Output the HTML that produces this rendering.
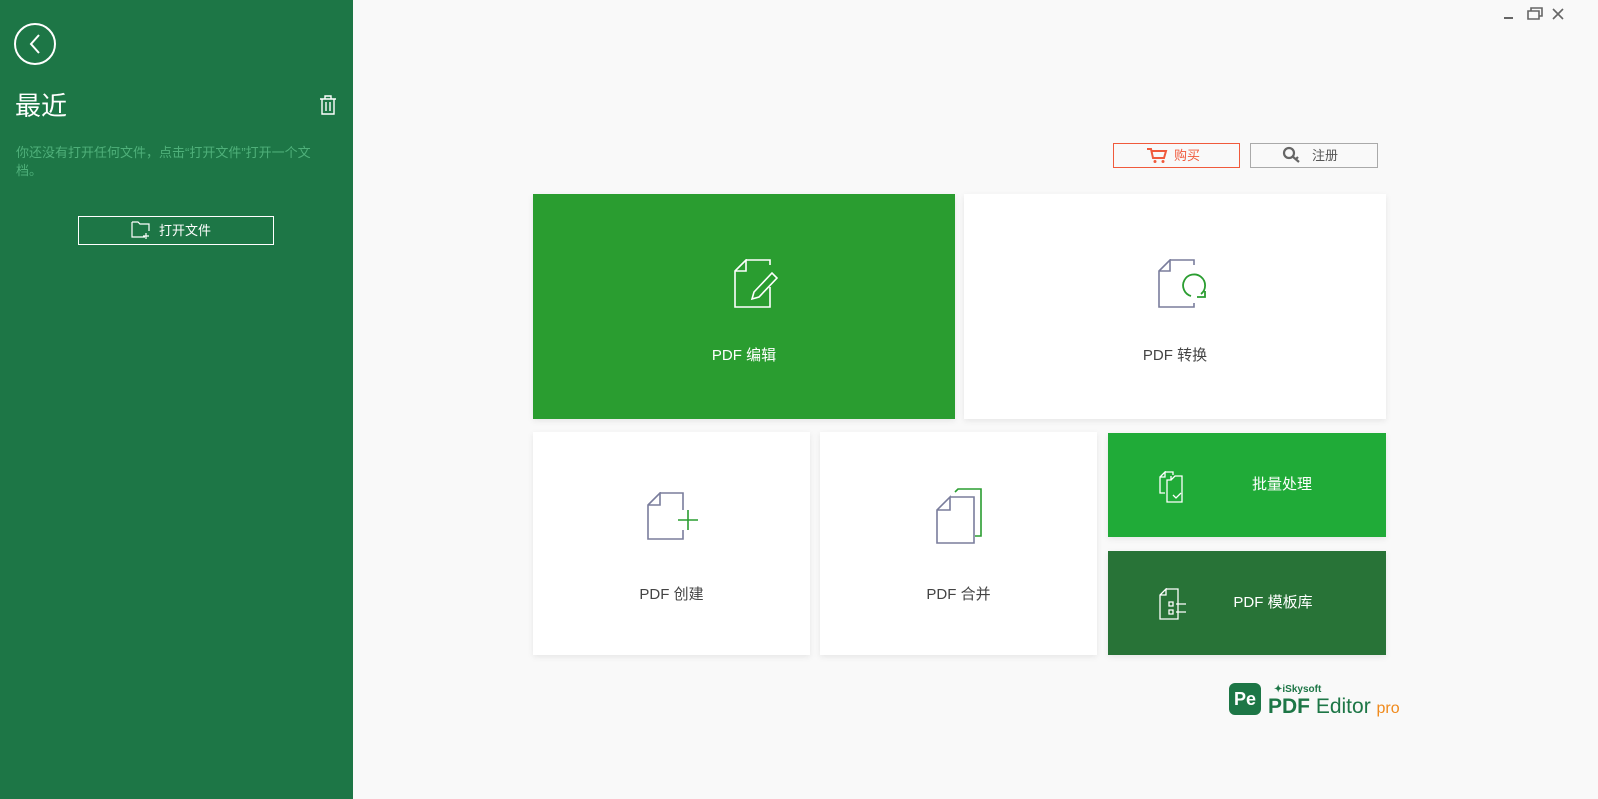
<!DOCTYPE html>
<html><head><meta charset="utf-8"><style>
*{margin:0;padding:0;box-sizing:border-box}
body{width:1598px;height:799px;background:#f9f9f9;font-family:"Liberation Sans","Noto Sans CJK SC",sans-serif;position:relative;overflow:hidden}
.side{position:absolute;left:0;top:0;width:353px;height:799px;background:#1d7646;color:#fff}
.card{position:absolute;box-shadow:0 2px 6px rgba(0,0,0,.08);font-size:15px;text-align:center}
.abs{position:absolute}
</style></head><body>
<div class="side">
<svg class="abs" style="left:14px;top:23px" width="42" height="42"><circle cx="21" cy="21" r="20" fill="none" stroke="#fff" stroke-width="2"/><path d="M25 12 L17 21 L25 30" fill="none" stroke="#fff" stroke-width="2"/></svg>
<div class="abs" style="left:15px;top:86px;font-size:26px">最近</div>
<svg class="abs" style="left:319px;top:95px" width="18" height="20"><path d="M1 4H17M6 4V1H12V4M3 4V19H15V4M7 7V16M11 7V16" fill="none" stroke="#fff" stroke-width="1.4"/></svg>
<div class="abs" style="left:16px;top:144px;width:320px;font-size:13px;line-height:18px;color:#4fb07a">你还没有打开任何文件，点击“打开文件”打开一个文档。</div>
<div class="abs" style="left:78px;top:216px;width:196px;height:29px;border:1px solid #fff;font-size:13px;line-height:27px;padding-left:80px">打开文件</div>
<svg class="abs" style="left:131px;top:221px" width="22" height="18"><path d="M1 1H7L9 3H18V10M1 1V16H14" fill="none" stroke="#fff" stroke-width="1.2"/><path d="M15 12V18M12 15H18" stroke="#fff" stroke-width="1.2"/></svg>
</div>
<svg class="abs" style="left:1500px;top:4px" width="98" height="20"><path d="M4 14H13" stroke="#666" stroke-width="2"/><path d="M28 7H39V15H28Z M31 7V4H42V12H39" fill="none" stroke="#666" stroke-width="1.6"/><path d="M53 5L63 15M63 5L53 15" stroke="#666" stroke-width="1.6"/></svg>
<div class="abs" style="left:1113px;top:143px;width:127px;height:25px;border:1px solid #f05a3c;color:#f05a3c;font-size:13px;line-height:23px;padding-left:60px">购买</div>
<svg class="abs" style="left:1146px;top:147px" width="22" height="17"><path d="M1 2H5L7 11H18L20 4H6" fill="none" stroke="#f05a3c" stroke-width="2"/><circle cx="9" cy="14.5" r="1.5" fill="#f05a3c"/><circle cx="17" cy="14.5" r="1.5" fill="#f05a3c"/></svg>
<div class="abs" style="left:1250px;top:143px;width:128px;height:25px;border:1px solid #aaa;color:#555;font-size:13px;line-height:23px;padding-left:61px">注册</div>
<svg class="abs" style="left:1282px;top:146px" width="22" height="18"><circle cx="7" cy="7" r="5" fill="none" stroke="#666" stroke-width="2.2"/><path d="M10 10L17 16M14 13L16 11" stroke="#666" stroke-width="2.2"/></svg>

<div class="card" style="left:533px;top:194px;width:422px;height:225px;background:#2a9d30;color:#fff"><div style="padding-top:150px">PDF 编辑</div>
<svg class="abs" style="left:201px;top:65px" width="48" height="50"><path d="M12 1H36V6M36 28V48H1V12L12 1V12H1" fill="none" stroke="#fff" stroke-width="1.6"/><path d="M18 40L20 33L38 14L43 19L25 38Z" fill="none" stroke="#fff" stroke-width="1.6"/></svg></div>
<div class="card" style="left:964px;top:194px;width:422px;height:225px;background:#fff;color:#444"><div style="padding-top:150px">PDF 转换</div>
<svg class="abs" style="left:194px;top:65px" width="50" height="50"><path d="M12 1H36V6M36 44V48H1V12L12 1V12H1" fill="none" stroke="#7a7d9c" stroke-width="1.6"/><path d="M33 37A11 11 0 1 1 43 35M39 38H47V32" fill="none" stroke="#2a9d30" stroke-width="1.8"/></svg></div>
<div class="card" style="left:533px;top:432px;width:277px;height:223px;background:#fff;color:#444"><div style="padding-top:151px">PDF 创建</div>
<svg class="abs" style="left:113px;top:60px" width="55" height="50"><path d="M14 1H37V18M37 38V47H2V13L14 1V13H2" fill="none" stroke="#7a7d9c" stroke-width="1.6"/><path d="M42 18V38M32 28H52" stroke="#2a9d30" stroke-width="1.6"/></svg></div>
<div class="card" style="left:820px;top:432px;width:277px;height:223px;background:#fff;color:#444"><div style="padding-top:151px">PDF 合并</div>
<svg class="abs" style="left:115px;top:55px" width="50" height="60"><path d="M20 5L23 2H46V49H40" fill="none" stroke="#2a9d30" stroke-width="1.6"/><path d="M15 10H39V56H2V23L15 10V23H2" fill="none" stroke="#7a7d9c" stroke-width="1.6"/></svg></div>
<div class="card" style="left:1108px;top:433px;width:278px;height:104px;background:#20ab38;color:#fff;line-height:104px;padding-left:70px">批量处理
<svg class="abs" style="left:50px;top:38px" width="32" height="32"><path d="M7 1H15V4M2 6L7 1V6H2V22H7M13 9L17 5H24V31H9V9H13V5" fill="none" stroke="#fff" stroke-width="1.3"/><path d="M15 24L18 27L23 22" fill="none" stroke="#fff" stroke-width="1.3"/></svg></div>
<div class="card" style="left:1108px;top:551px;width:278px;height:104px;background:#287337;color:#fff;line-height:104px;padding-left:52px">PDF 模板库
<svg class="abs" style="left:50px;top:37px" width="32" height="34"><path d="M8 1H20V31H2V7L8 1V7H2" fill="none" stroke="#fff" stroke-width="1.3"/><path d="M11 14H15V18H11ZM11 22H15V26H11ZM18 16H28M18 24H28" fill="none" stroke="#fff" stroke-width="1.3"/></svg></div>

<div class="abs" style="left:1229px;top:683px;width:32px;height:32px;border-radius:6px;background:#1d7646;color:#fff;font-weight:bold;font-size:18px;line-height:32px;text-align:center">Pe</div>
<div class="abs" style="left:1274px;top:684px;font-size:10px;font-weight:bold;color:#1d7646">✦iSkysoft</div>
<div class="abs" style="left:1268px;top:695px;font-size:21px;color:#1d7646;white-space:nowrap"><b>PDF</b> Editor <span style="color:#f08a1c;font-size:16px">pro</span></div>
</body></html>
